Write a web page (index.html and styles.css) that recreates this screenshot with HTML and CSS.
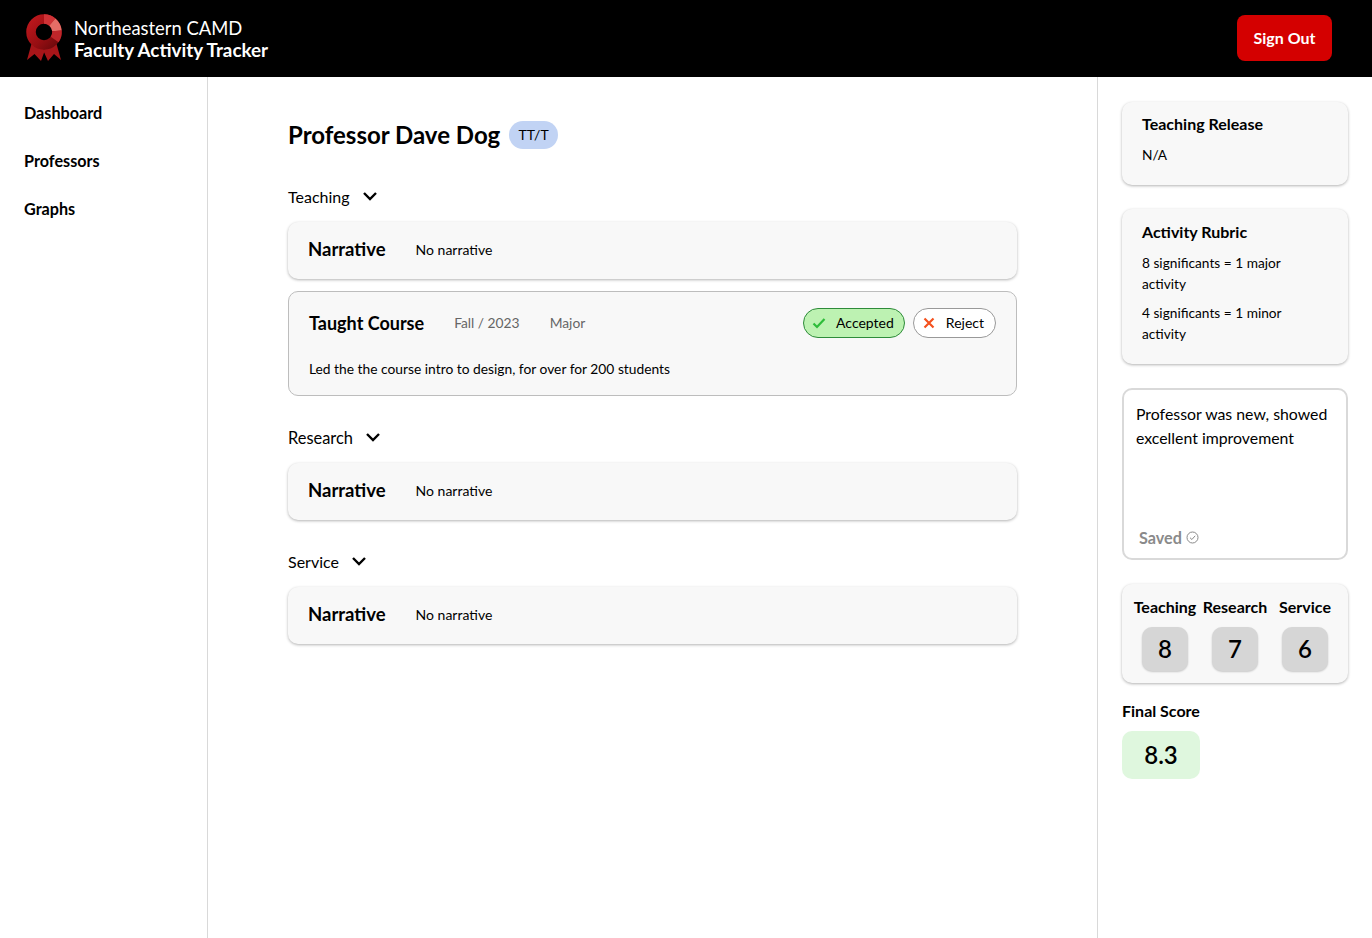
FILE: index.html
```html
<!DOCTYPE html>
<html lang="en">
  <head>
    <meta charset="UTF-8" />
    <title>Faculty Activity Tracker</title>
    <link rel="stylesheet" href="styles.css">
  </head>
  <body>
    <header class="topbar">
      <div class="brand">
        <svg class="logo" width="40" height="50" viewBox="0 0 40 50">
          <defs>
            <linearGradient id="ring" x1="0" y1="0" x2="1" y2="1">
              <stop offset="0" stop-color="#bc171c" />
              <stop offset="0.6" stop-color="#960e12" />
              <stop offset="1" stop-color="#6e090c" />
            </linearGradient>
          </defs>
          <path d="M8 28 L3 46 L10.5 40 L17 47 L21 36 Z" fill="#a81519" />
          <path d="M32 28 L37 46 L30 40 L24 47 L19 36 Z" fill="#a81519" />
          <circle cx="20" cy="18" r="13" fill="#000" stroke="url(#ring)" stroke-width="9.5" />
          <path d="M20 5 A13 13 0 0 1 28.36 8.04" fill="none" stroke="#cf3236" stroke-width="9.5" />
          <path d="M28.36 8.04 A13 13 0 0 1 32.95 16.87" fill="none" stroke="#e56d66" stroke-width="9.5" />
          <path d="M32.95 16.87 A13 13 0 0 1 30.65 25.46" fill="none" stroke="#c0262a" stroke-width="9.5" />
        </svg>
        <div class="brand-text">
          <span class="brand-top">Northeastern CAMD</span>
          <span class="brand-bottom">Faculty Activity Tracker</span>
        </div>
      </div>
      <button class="signout">Sign Out</button>
    </header>
    <div class="layout">
      <nav class="sidebar">
        <a href="#">Dashboard</a>
        <a href="#">Professors</a>
        <a href="#">Graphs</a>
      </nav>
      <main class="content">
        <div class="title-row">
          <h1>Professor Dave Dog</h1>
          <span class="tag">TT/T</span>
        </div>

        <section class="group">
          <div class="group-head">
            <span>Teaching</span>
            <svg width="16" height="10" viewBox="0 0 16 10"><path d="M2 2 L8 8 L14 2" fill="none" stroke="#000" stroke-width="2.4" /></svg>
          </div>
          <div class="card narrative">
            <h3>Narrative</h3>
            <p>No narrative</p>
          </div>
          <div class="activity">
            <div class="activity-top">
              <h3>Taught Course</h3>
              <span class="meta">Fall / 2023</span>
              <span class="meta">Major</span>
              <div class="actions">
                <button class="pill accepted">
                  <svg width="14" height="12" viewBox="0 0 14 12"><path d="M1.5 6.5 L5 10 L12.5 2" fill="none" stroke="#2ebd3a" stroke-width="2.2" /></svg>
                  Accepted
                </button>
                <button class="pill reject">
                  <svg width="12" height="12" viewBox="0 0 12 12"><path d="M1.5 1.5 L10.5 10.5 M10.5 1.5 L1.5 10.5" fill="none" stroke="#f4511e" stroke-width="2.2" /></svg>
                  Reject
                </button>
              </div>
            </div>
            <p>Led the the course intro to design, for over for 200 students</p>
          </div>
        </section>

        <section class="group">
          <div class="group-head">
            <span class="research">Research</span>
            <svg width="16" height="10" viewBox="0 0 16 10"><path d="M2 2 L8 8 L14 2" fill="none" stroke="#000" stroke-width="2.4" /></svg>
          </div>
          <div class="card narrative">
            <h3>Narrative</h3>
            <p>No narrative</p>
          </div>
        </section>

        <section class="group">
          <div class="group-head">
            <span>Service</span>
            <svg width="16" height="10" viewBox="0 0 16 10"><path d="M2 2 L8 8 L14 2" fill="none" stroke="#000" stroke-width="2.4" /></svg>
          </div>
          <div class="card narrative">
            <h3>Narrative</h3>
            <p>No narrative</p>
          </div>
        </section>
      </main>
      <aside class="panel">
        <div class="card info">
          <h4>Teaching Release</h4>
          <p>N/A</p>
        </div>
        <div class="card info">
          <h4>Activity Rubric</h4>
          <p>8 significants = 1 major activity</p>
          <p>4 significants = 1 minor activity</p>
        </div>
        <div class="note">
          <p>Professor was new, showed excellent improvement</p>
          <div class="saved">
            Saved
            <svg width="13" height="13" viewBox="0 0 13 13"><circle cx="6.5" cy="6.5" r="5.5" fill="none" stroke="#8a8a8a" /><path d="M4 6.7 L5.9 8.5 L9.2 4.8" fill="none" stroke="#8a8a8a" /></svg>
          </div>
        </div>
        <div class="card scores">
          <div class="score"><span>Teaching</span><b>8</b></div>
          <div class="score"><span>Research</span><b>7</b></div>
          <div class="score"><span>Service</span><b>6</b></div>
        </div>
        <div class="final">
          <h4>Final Score</h4>
          <div class="final-value">8.3</div>
        </div>
      </aside>
    </div>
  </body>
</html>
```
FILE: styles.css
```css
* {
  box-sizing: border-box;
}
body {
  margin: 0;
  font-family: Lato, sans-serif;
  color: #000;
  background-color: #fff;
  height: 938px;
  overflow: hidden;
}
h1,
h3,
h4,
p {
  margin: 0;
}
.topbar {
  height: 77px;
  background-color: #000;
  display: flex;
  justify-content: space-between;
  align-items: center;
  padding: 0 40px 0 24px;
}
.brand {
  display: flex;
  align-items: center;
  gap: 10px;
}
.logo {
  margin-top: 1px;
}
.brand-text {
  display: flex;
  flex-direction: column;
  color: #fff;
  line-height: 22px;
}
.brand-top {
  font-size: 18.4px;
  font-weight: 400;
}
.brand-bottom {
  font-size: 18.8px;
  font-weight: 700;
}
.signout {
  width: 95px;
  height: 46px;
  background-color: #d40000;
  color: #fff;
  border: 0;
  border-radius: 8px;
  margin-bottom: 2px;
  padding-bottom: 2px;
  font-family: inherit;
  font-size: 16px;
  font-weight: 700;
}
.layout {
  display: flex;
  height: 861px;
}
.sidebar {
  width: 208px;
  border-right: 1px solid #d9d9d9;
  padding: 24px 24px 0;
  display: flex;
  flex-direction: column;
}
.sidebar a {
  color: #000;
  text-decoration: none;
  font-size: 16.2px;
  font-weight: 700;
  line-height: 24px;
  margin-bottom: 24px;
}
.content {
  width: 889px;
  padding: 44px 80px 0;
}
.title-row {
  display: flex;
  align-items: center;
  gap: 9px;
  height: 28px;
  margin-bottom: 35px;
}
h1 {
  font-size: 24px;
  font-weight: 700;
  margin-bottom: 2px;
}
.tag {
  background-color: #c1d3f4;
  border-radius: 14px;
  font-size: 14px;
  line-height: 28px;
  padding: 0 9.2px;
}
.group {
  margin-bottom: 29px;
}
.group-head {
  display: flex;
  align-items: center;
  gap: 12px;
  height: 24px;
  margin-bottom: 14px;
  font-size: 16px;
}
.research {
  font-size: 16.4px;
}
.card {
  background-color: #f8f8f8;
  border-radius: 10px;
  box-shadow: 0 1px 3px rgba(0, 0, 0, 0.3);
}
.narrative {
  display: flex;
  align-items: center;
  gap: 30px;
  height: 57px;
  padding: 0 20px 3px;
}
h3 {
  font-size: 18.5px;
  font-weight: 700;
}
.narrative p {
  font-size: 14px;
}
.activity {
  margin-top: 12px;
  height: 105px;
  background-color: #f8f8f8;
  border: 1px solid #bdbdbd;
  border-radius: 10px;
  padding: 16px 20px 0;
}
.activity p {
  font-size: 13.8px;
  line-height: 20px;
  margin-top: 21px;
}
.activity-top {
  display: flex;
  align-items: center;
  gap: 30px;
  height: 30px;
}
.activity-top h3 {
  font-size: 18px;
}
.meta {
  font-size: 13.8px;
  color: #666;
  margin-bottom: 2px;
}
.actions {
  display: flex;
  gap: 8px;
  margin-left: auto;
}
.pill {
  display: flex;
  align-items: center;
  height: 30px;
  border-radius: 15px;
  font-family: inherit;
  font-size: 14px;
  color: #000;
  padding-top: 0;
  padding-bottom: 1px;
  padding-right: 11px;
}
.accepted {
  gap: 10px;
  padding-left: 8px;
  padding-right: 10px;
  background-color: #bdf2b2;
  border: 1px solid #2e8b3a;
}
.reject {
  gap: 11px;
  padding-left: 9px;
  background-color: #fff;
  border: 1px solid #999;
}
.panel {
  width: 275px;
  border-left: 1px solid #d9d9d9;
  padding: 24px 24px 0;
  display: flex;
  flex-direction: column;
}
.info {
  padding: 12px 20px 10px;
  margin-bottom: 24px;
}
.info:first-child {
  margin-top: 1px;
  padding-top: 11px;
}
h4 {
  font-size: 16px;
  font-weight: 700;
  line-height: 22px;
}
.info p {
  font-size: 13.7px;
  line-height: 21px;
  margin-top: 9px;
  margin-bottom: 10px;
}
.info p + p {
  margin-top: -2px;
}
.note {
  height: 172px;
  border: 2px solid #d9d9d9;
  border-radius: 10px;
  padding: 12px 12px 11px;
  margin-bottom: 24px;
  display: flex;
  flex-direction: column;
  justify-content: space-between;
}
.note p {
  font-size: 15.85px;
  line-height: 24px;
}
.saved {
  display: flex;
  align-items: center;
  gap: 4px;
  padding-left: 3px;
  font-size: 16.2px;
  font-weight: 700;
  color: #8a8a8a;
}
.scores {
  display: grid;
  grid-template-columns: repeat(3, 70px);
  justify-content: center;
  height: 99px;
  padding-top: 11px;
  margin-bottom: 17px;
}
.score {
  display: flex;
  flex-direction: column;
  align-items: center;
  gap: 8px;
}
.score span {
  font-size: 16px;
  font-weight: 700;
  line-height: 24px;
  white-space: nowrap;
}
.score b {
  width: 46px;
  height: 44px;
  background-color: #d6d6d6;
  border-radius: 10px;
  box-shadow: 0 1px 2px rgba(0, 0, 0, 0.2);
  font-size: 24px;
  font-weight: 600;
  line-height: 44px;
  text-align: center;
}
.final-value {
  width: 78px;
  height: 48px;
  margin-top: 9px;
  background-color: #dff7de;
  border-radius: 10px;
  font-size: 24px;
  font-weight: 600;
  line-height: 48px;
  text-align: center;
}
```
